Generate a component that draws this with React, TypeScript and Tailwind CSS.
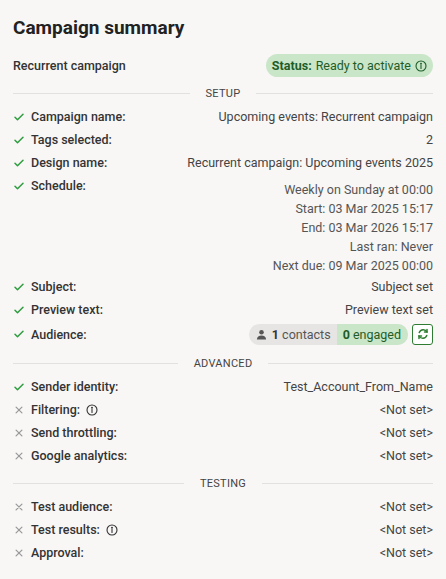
import React from 'react';

const Check = () => (
  <svg width="12" height="12" viewBox="0 0 24 24" fill="none" stroke="#2e9d3f" strokeWidth="3" strokeLinecap="round" strokeLinejoin="round"><path d="M4 12.5l5 5L20 6.5" /></svg>
);
const Cross = () => (
  <svg width="10" height="10" viewBox="0 0 24 24" fill="none" stroke="#9a9a9a" strokeWidth="3" strokeLinecap="round"><path d="M5 5l14 14M19 5L5 19" /></svg>
);
const Info = ({ c = '#333' }: { c?: string }) => (
  <svg width="12" height="12" viewBox="0 0 24 24" fill="none" stroke={c} strokeWidth="2.2"><circle cx="12" cy="12" r="10" /><path d="M12 11v6" strokeLinecap="round" /><circle cx="12" cy="7.5" r="0.8" fill={c} /></svg>
);

const Divider = ({ label }: { label: string }) => (
  <div className="flex items-center gap-4 h-[20px] mt-[6px] mb-[2px]">
    <div className="flex-1 h-px bg-[#e2e1e0]" />
    <span className="text-[11px] text-[#444] tracking-wide">{label}</span>
    <div className="flex-1 h-px bg-[#e2e1e0]" />
  </div>
);

const Row = ({ ok, label, info, children }: { ok: boolean; label: string; info?: boolean; children: React.ReactNode }) => (
  <div className="flex items-start justify-between min-h-[23px] py-[3px]">
    <div className="flex items-center gap-[6px] font-medium text-[#333]">
      <span className="w-[12px] flex justify-center">{ok ? <Check /> : <Cross />}</span>
      {label}
      {info && <Info />}
    </div>
    <div className="text-right text-[#444]">{children}</div>
  </div>
);

export default function App() {
  return (
    <div className="w-[446px] h-[579px] bg-[#f8f7f6] px-[13px] pt-[16px] text-[12.5px] leading-[17px]" style={{ fontFamily: 'Roboto, sans-serif' }}>
      <h1 className="text-[19px] font-bold text-[#222] leading-[24px] mb-[14px]">Campaign summary</h1>
      <div className="flex items-center justify-between">
        <span className="font-medium text-[#333]">Recurrent campaign</span>
        <span className="flex items-center gap-1 bg-[#c9e6c9] text-[#1f5c27] rounded-full px-[6px] py-[3px]">
          <b>Status:</b> Ready to activate <Info c="#1f5c27" />
        </span>
      </div>
      <Divider label="SETUP" />
      <Row ok label="Campaign name:">Upcoming events: Recurrent campaign</Row>
      <Row ok label="Tags selected:">2</Row>
      <Row ok label="Design name:">Recurrent campaign: Upcoming events 2025</Row>
      <div className="flex items-start justify-between pt-[3px]">
        <div className="flex items-center gap-[6px] font-medium text-[#333]">
          <span className="w-[12px] flex justify-center"><Check /></span>Schedule:
        </div>
        <div className="pt-[3px] leading-[19px] text-right text-[#555]">
          <div>Weekly on Sunday at 00:00</div>
          <div>Start: 03 Mar 2025 15:17</div>
          <div>End: 03 Mar 2026 15:17</div>
          <div>Last ran: Never</div>
          <div>Next due: 09 Mar 2025 00:00</div>
        </div>
      </div>
      <Row ok label="Subject:">Subject set</Row>
      <Row ok label="Preview text:">Preview text set</Row>
      <div className="flex items-center justify-between h-[26px]">
        <div className="flex items-center gap-[6px] font-medium text-[#333]">
          <span className="w-[12px] flex justify-center"><Check /></span>Audience:
        </div>
        <div className="flex items-center gap-[4px]">
          <div className="flex items-center rounded-full overflow-hidden bg-[#e6e5e4]">
            <span className="flex items-center gap-[5px] pl-[7px] pr-[6px] py-[2px] text-[#555]">
              <svg width="11" height="11" viewBox="0 0 24 24" fill="#555"><circle cx="12" cy="7" r="5" /><path d="M2 23c0-6 4.5-9 10-9s10 3 10 9z" /></svg>
              <span><b className="text-[#333]">1</b> contacts</span>
            </span>
            <span className="bg-[#c9e6c9] text-[#1f5c27] pl-[6px] pr-[7px] py-[2px]"><b>0</b> engaged</span>
          </div>
          <span className="w-[21px] h-[21px] border border-[#2e7d32] rounded-[3px] flex items-center justify-center bg-white">
            <svg width="12" height="12" viewBox="0 0 24 24" fill="none" stroke="#2e7d32" strokeWidth="3" strokeLinecap="round"><path d="M20 8a8.5 8.5 0 0 0-15.5 1" /><path d="M4 16a8.5 8.5 0 0 0 15.5-1" /><path d="M20 3v5h-5" /><path d="M4 21v-5h5" /></svg>
          </span>
        </div>
      </div>
      <div className="mt-[5px]"><Divider label="ADVANCED" /></div>
      <Row ok label="Sender identity:">Test_Account_From_Name</Row>
      <Row ok={false} label="Filtering:" info>&lt;Not set&gt;</Row>
      <Row ok={false} label="Send throttling:">&lt;Not set&gt;</Row>
      <Row ok={false} label="Google analytics:">&lt;Not set&gt;</Row>
      <div className="mt-[1px]"><Divider label="TESTING" /></div>
      <Row ok={false} label="Test audience:">&lt;Not set&gt;</Row>
      <Row ok={false} label="Test results:" info>&lt;Not set&gt;</Row>
      <Row ok={false} label="Approval:">&lt;Not set&gt;</Row>
    </div>
  );
}
